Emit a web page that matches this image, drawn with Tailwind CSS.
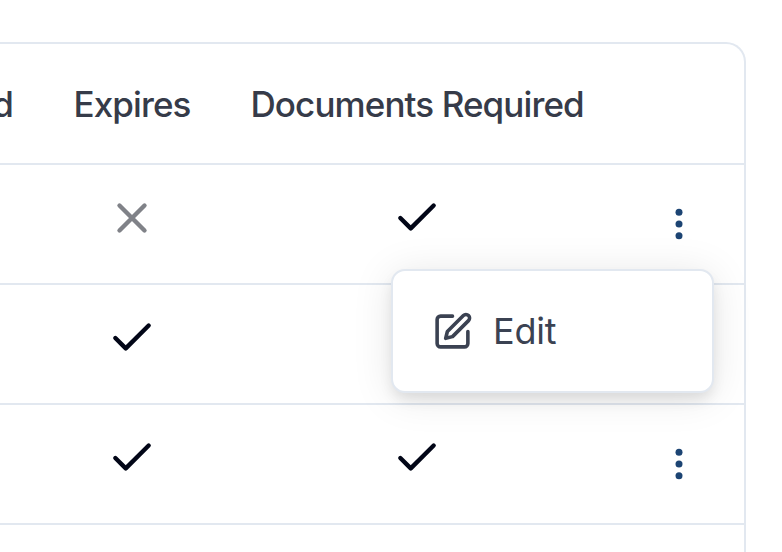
<!DOCTYPE html>
<html lang="en">
<head>
<meta charset="utf-8">
<title>Documents</title>
<script src="https://cdn.jsdelivr.net/npm/@tailwindcss/browser@4"></script>
</head>
<body class="bg-white w-[782px] h-[552px] overflow-hidden font-['Inter',sans-serif] text-[#020617]">
<svg class="hidden">
  <symbol id="check" viewBox="0 0 24 24" fill="none" stroke="currentColor" stroke-width="2.1" stroke-linecap="round" stroke-linejoin="round"><path d="M20 6 9 17l-5-5"/></symbol>
  <symbol id="x" viewBox="0 0 24 24" fill="none" stroke="currentColor" stroke-width="2.1" stroke-linecap="round" stroke-linejoin="round"><path d="M18 6 6 18M6 6l12 12"/></symbol>
  <symbol id="dots" viewBox="0 0 24 24" fill="currentColor"><circle cx="12" cy="5" r="2.1"/><circle cx="12" cy="12" r="2.1"/><circle cx="12" cy="19" r="2.1"/></symbol>
</svg>
<div class="relative h-[552px] overflow-hidden pt-[42px]">
  <div class="w-[746px] h-[560px] border-2 border-l-0 border-[#e2e8f0] rounded-tr-[20px]">
    <div class="grid grid-cols-[43px_177px_394px_130px] h-[121px] items-center pt-[2px] border-b-2 border-[#e2e8f0] text-[35px] font-medium tracking-[-0.9px] text-[#363b49] whitespace-nowrap">
      <div class="flex justify-end pr-[30px]">Required</div>
      <div class="pl-[30.5px]">Expires</div>
      <div class="pl-[30.5px]">Documents Required</div>
      <div></div>
    </div>
    <div class="grid grid-cols-[44px_176px_394px_130px] h-[120px] border-b-2 border-[#e2e8f0]">
      <div></div>
      <div class="flex justify-center pt-[28px]"><svg class="size-[50px] text-[#808288]"><use href="#x"/></svg></div>
      <div class="flex justify-center pt-[28px]"><svg class="size-[50px]"><use href="#check"/></svg></div>
      <div class="flex justify-center pt-[39px]"><svg class="size-10 text-[#1c4473]"><use href="#dots"/></svg></div>
    </div>
    <div class="grid grid-cols-[44px_176px_394px_130px] h-[120px] border-b-2 border-[#e2e8f0]">
      <div></div>
      <div class="flex justify-center pt-[28px]"><svg class="size-[50px]"><use href="#check"/></svg></div>
    </div>
    <div class="grid grid-cols-[44px_176px_394px_130px] h-[120px] border-b-2 border-[#e2e8f0]">
      <div></div>
      <div class="flex justify-center pt-[28px]"><svg class="size-[50px]"><use href="#check"/></svg></div>
      <div class="flex justify-center pt-[28px]"><svg class="size-[50px]"><use href="#check"/></svg></div>
      <div class="flex justify-center pt-[39px]"><svg class="size-10 text-[#1c4473]"><use href="#dots"/></svg></div>
    </div>
  </div>
  <div class="absolute left-[391px] top-[269px] w-[323px] h-[124px] flex items-center gap-[20px] pl-[39px] bg-white border-2 border-[#e2e8f0] rounded-[14px] shadow-[0_8px_14px_-2px_rgb(0_0_0/0.1),0_4px_40px_0_rgb(0_0_0/0.1)] text-[#3b4252]">
    <svg class="size-[41px]" viewBox="0 0 24 24" fill="none" stroke="currentColor" stroke-width="2.1" stroke-linecap="round" stroke-linejoin="round"><path d="M12 3H5a2 2 0 0 0-2 2v14a2 2 0 0 0 2 2h14a2 2 0 0 0 2-2v-7"/><path d="M18.375 2.625a2.121 2.121 0 1 1 3 3L12 15l-4 1 1-4Z"/></svg>
    <span class="text-[36px] tracking-[-0.2px]">Edit</span>
  </div>
</div>
</body>
</html>
